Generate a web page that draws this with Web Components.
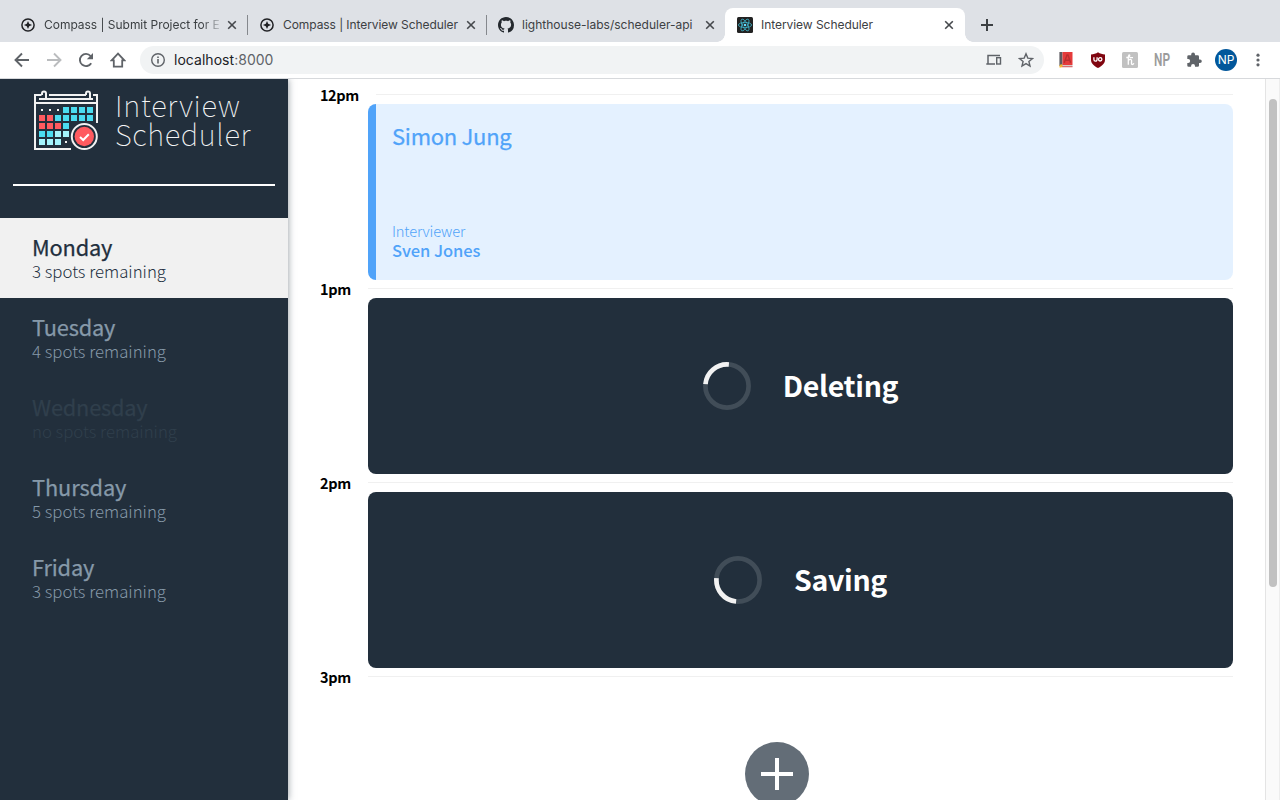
<!DOCTYPE html>
<html lang="en"><head><meta charset="utf-8"><title>Interview Scheduler</title>
<style>html,body{margin:0;height:100%;overflow:hidden;background:#fff}body{font-family:"Noto Sans CJK JP","Noto Sans",sans-serif;color:#000}</style></head>
<body><browser-window></browser-window>
<script>
const define=(name,html,setup)=>customElements.define(name,class extends HTMLElement{
  connectedCallback(){
    if(this.shadowRoot)return;
    const t=document.createElement('template');
    t.innerHTML=typeof html==='function'?html(this):html;
    this.attachShadow({mode:'open'}).appendChild(t.content.cloneNode(true));
    if(setup)setup(this);
  }
});
const attr=(e,n)=>e.getAttribute(n)||'';

/* One line of text, tracked to an optional advance width (w). */
define('fit-text','<style>:host{display:block;white-space:nowrap;width:max-content}</style><span><slot></slot></span>',e=>{
  const w=+attr(e,'w');if(!w)return;
  const s=e.shadowRoot.querySelector('span'),n=e.textContent.length;
  s.style.letterSpacing=((w-s.getBoundingClientRect().width)/n).toFixed(3)+'px';
});

const icons={
compass:'<circle cx="8" cy="8" r="6.1" fill="none" stroke="#202124" stroke-width="1.5"/><path d="M8 3.900 9.2 6.800 12.1 8 9.2 9.2 8 12.1 6.800 9.2 3.900 8 6.800 6.800Z" fill="#202124"/>',
github:'<path fill="#24292e" d="M8 0C3.58 0 0 3.58 0 8c0 3.54 2.29 6.53 5.47 7.59.4.07.55-.17.55-.38 0-.19-.01-.82-.01-1.49-2.01.37-2.53-.49-2.69-.94-.09-.23-.48-.94-.82-1.13-.28-.15-.68-.52-.01-.53.63-.01 1.08.58 1.23.82.72 1.21 1.87.87 2.33.66.07-.52.28-.87.51-1.07-1.78-.2-3.64-.89-3.64-3.95 0-.87.31-1.59.82-2.15-.08-.2-.36-1.02.08-2.12 0 0 .67-.21 2.2.82.64-.18 1.32-.27 2-.27s1.36.09 2 .27c1.53-1.04 2.2-.82 2.2-.82.44 1.1.16 1.92.08 2.12.51.56.82 1.27.82 2.15 0 3.07-1.87 3.75-3.65 3.95.29.25.54.73.54 1.48 0 1.07-.01 1.93-.01 2.2 0 .21.15.46.55.38A8.01 8.01 0 0 0 16 8c0-4.42-3.58-8-8-8Z"/>',
react:'<rect width="16" height="16" rx="1.5" fill="#222"/><g fill="none" stroke="#3fb3c9" stroke-width=".8"><ellipse cx="8" cy="8" rx="6.6" ry="2.6"/><ellipse cx="8" cy="8" rx="6.6" ry="2.6" transform="rotate(60 8 8)"/><ellipse cx="8" cy="8" rx="6.6" ry="2.6" transform="rotate(120 8 8)"/></g><circle cx="8" cy="8" r="1.3" fill="#61dafb"/>',
close:'<path d="M4.2 4.2 11.8 11.8M11.8 4.2 4.2 11.8" stroke="#45484c" stroke-width="1.6"/>',
plus:'<path d="M8 2v12M2 8h12" stroke="#3c4043" stroke-width="2"/>',
back:'<path d="M15 8H2M8 1.5 1.5 8 8 14.5" fill="none" stroke="#5f6368" stroke-width="1.9"/>',
forward:'<path d="M1 8h13M8 1.5 14.5 8 8 14.5" fill="none" stroke="#babcbe" stroke-width="1.9"/>',
reload:'<path d="M13.2 11.2A6.1 6.1 0 1 1 12.6 4" fill="none" stroke="#5f6368" stroke-width="1.9"/><path d="M15 1v6.2H8.8Z" fill="#5f6368"/>',
home:'<path d="M8 1.6 1.6 8.3H3.8V14.6H12.2V8.3h2.2Z" fill="none" stroke="#5f6368" stroke-width="1.8"/>',
info:'<circle cx="8" cy="8" r="6.3" fill="none" stroke="#5f6368" stroke-width="1.4"/><path d="M8 7v4.4M8 4.4v1.5" stroke="#5f6368" stroke-width="1.6"/>',
devices:'<path d="M2 11.6V3.6H14M.3 12H9" fill="none" stroke="#5f6368" stroke-width="1.5"/><rect x="10.7" y="5.700" width="3.800" height="6.300" fill="none" stroke="#5f6368" stroke-width="1.4"/>',
star:'<path d="M8 1.8 9.8 6.1 14.5 6.5 10.9 9.5 12 14.1 8 11.6 4 14.1 5.1 9.5 1.5 6.5 6.2 6.1Z" fill="none" stroke="#5f6368" stroke-width="1.4"/>',
book:'<path d="M1.4 0H4.500v14H1.4Z" fill="#5d5b60"/><path d="M4.500 0H14.500V13H4.500Z" fill="#e53b3b"/><path d="M4 13h10.5v2H3Z" fill="#d7c9c9"/><path d="M4 14.4h10.5v.8H4Z" fill="#d53535"/><path d="M1.5 13.2 3.3 12l1.5 1.8L3.5 15.5H1.5Z" fill="#f5b52c"/><path d="M6.2 10.8 9 3h1L12.600 10.800M7 8.3h4.8" fill="none" stroke="#b92f2f" stroke-width="1.4"/>',
ublock:'<path d="M8 .2C10 1.7 12.4 2.3 15 2.4V7.5C15 11.4 12.5 13.7 8 16 3.5 13.7 1 11.4 1 7.5V2.4C3.600 2.3 6 1.700 8 .2Z" fill="#800610"/><path d="M3.9 5.3v2.3a1.5 1.5 0 0 0 3.2 0V5.300" fill="none" stroke="#fff" stroke-width="1.3"/><circle cx="10.2" cy="7.3" r="1.7" fill="none" stroke="#fff" stroke-width="1.3"/>',
honey:'<rect width="16" height="16" rx="1.500" fill="#c1c1c1"/><path d="M4.300 5.500C6.500 5.500 8.200 4.300 7.700 3.200 7 2.300 6.300 3.800 6.300 6V12.700M6.300 9C7 7.200 9.600 6.800 9.600 8.700 9.600 10.300 9.100 12.500 10.200 12.500 11 12.500 11.500 12 11.900 11.200M7.500 5.600H11" fill="none" stroke="#fff" stroke-width="1.3"/>',
puzzle:'<path fill="#5f6368" d="M14 7.400H13V4.700A1.400 1.400 0 0 0 11.600 3.300H9V2.400A1.900 1.900 0 0 0 5.200 2.400V3.300H2.600A1.300 1.300 0 0 0 1.300 4.600V7.100H2.200A1.950 1.950 0 0 1 2.200 11H1.300V13.500A1.300 1.300 0 0 0 2.600 14.800H5.100V13.900A1.950 1.950 0 0 1 9 13.900V14.800H11.600A1.400 1.400 0 0 0 13 13.400V11H14A1.800 1.800 0 0 0 14 7.400Z"/>',
dots:'<g fill="#5f6368"><circle cx="8" cy="3.200" r="1.600"/><circle cx="8" cy="8" r="1.600"/><circle cx="8" cy="12.800" r="1.600"/></g>'
};
define('ui-icon',e=>`<style>:host{display:block;width:16px;height:16px;flex:none}svg{display:block}</style><svg width="16" height="16" viewBox="0 0 16 16">${icons[attr(e,'name')]}</svg>`);

define('browser-tab',e=>`<style>
:host{display:flex;box-sizing:border-box;width:239px;height:34px;padding:0 7px 0 12px;align-items:center;position:relative;font:12px Inter,sans-serif;color:#3c4043}
:host([active]){width:240px;background:#fff;border-radius:8px 8px 0 0;padding-right:8px}
.label{margin:-1px 0 0 8px;flex:1;min-width:0}
:host([clipped]) .label{flex:none;width:177px;-webkit-mask:linear-gradient(90deg,#000 158px,transparent 180px)}
.close{margin-left:auto}
:host([divided])::after{content:"";position:absolute;right:-1px;top:7px;width:1px;height:20px;background:#85888d}
:host([active])::before,:host([active])::after{content:"";position:absolute;bottom:0;width:8px;height:8px}
:host([active])::before{left:-8px;background:radial-gradient(circle at 0 0,transparent 7.500px,#fff 8px)}
:host([active])::after{right:-8px;background:radial-gradient(circle at 100% 0,transparent 7.500px,#fff 8px)}
</style><ui-icon name="${attr(e,'icon')}"></ui-icon><div class="label"><fit-text w="${attr(e,'w')}">${e.textContent}</fit-text></div><ui-icon class="close" name="close"></ui-icon>`);

define('tab-strip',`<style>:host{display:flex;height:42px;box-sizing:border-box;padding:8px 0 0 8px;background:#dee1e6}.new{margin:9px 0 0 14px}</style>
<browser-tab icon="compass" divided clipped w="175.800">Compass | Submit Project for E</browser-tab><browser-tab icon="compass" divided w="175">Compass | Interview Scheduler</browser-tab><browser-tab icon="github" w="170.500">lighthouse-labs/scheduler-api</browser-tab><browser-tab icon="react" active w="112">Interview Scheduler</browser-tab><ui-icon class="new" name="plus"></ui-icon>`);

define('browser-toolbar',`<style>
:host{display:flex;align-items:center;height:37px;box-sizing:border-box;padding:0 14px;gap:16px;border-bottom:1px solid #d7d9dc;background:#fff;font-family:Inter,sans-serif}
.url{display:flex;align-items:center;box-sizing:border-box;width:904px;height:28px;border-radius:14px;background:#f1f3f4;padding:0 10px;margin:0 -2px;font-size:14px;color:#202124}
.url fit-text{margin:-2px auto 0 8px}.port{color:#5f6368}.devices{margin-right:1px}.star{margin-left:15px}
.np{width:16px}.np svg{display:block;overflow:visible}
.avatar{width:22px;height:22px;margin:0 -3px;border-radius:50%;background:#02579b;color:#fff;font:12px/22px Inter,sans-serif;text-align:center;flex:none}
.exts{display:flex;gap:16px;align-items:center}
</style>
<ui-icon name="back"></ui-icon><ui-icon name="forward"></ui-icon><ui-icon name="reload"></ui-icon><ui-icon name="home"></ui-icon>
<div class="url"><ui-icon name="info"></ui-icon><fit-text w="99.500">localhost<span class="port">:8000</span></fit-text><ui-icon class="devices" name="devices"></ui-icon><ui-icon class="star" name="star"></ui-icon></div>
<div class="exts"><ui-icon name="book"></ui-icon><ui-icon name="ublock"></ui-icon><ui-icon name="honey"></ui-icon>
<div class="np"><svg width="16" height="16"><text x="0" y="14" textLength="16" lengthAdjust="spacingAndGlyphs" fill="#9b9b9b" font-family="Roboto" font-weight="600" font-size="18">NP</text></svg></div>
<ui-icon name="puzzle"></ui-icon><div class="avatar">NP</div><ui-icon name="dots"></ui-icon></div>`);

const cell=(x,y,c)=>`<rect x="${5+8*x}" y="${17+8*y}" width="6" height="6" fill="${c}"/>`;
const C='#4bdcf0',L='#a4f4fc',R='#ff5a5f';
const grid=[[0,0,0,C,C,C,C],[R,R,C,C,C,C,C],[R,R,R,C],[C,C,L,L],[L,L,L]].map((r,y)=>r.map((c,x)=>c?cell(x,y,c):'').join('')).join('');
define('scheduler-logo',`<style>:host{display:flex;height:60px;padding:11px 0 0 34px;color:#f4f5f6;font-weight:100;font-size:29.300px;line-height:29px}.words{margin-left:17px}svg{display:block;flex:none}</style>
<svg width="64" height="60" viewBox="0 0 64 60">${grid}
<g fill="#f2f2f2"><rect x="7" y="19" width="2" height="2"/><rect x="15" y="19" width="2" height="2"/><rect x="23" y="19" width="2" height="2"/><rect x="31" y="51" width="2" height="2"/></g>
<g fill="none" stroke="#f2f2f2" stroke-width="2"><path d="M37 59H1V5H7.500M15 5H52M59 5H63V33M1 13H63M5 9H59"/><path d="M8 5V3.500A2 2 0 0 1 12 3.500V9M52 5V3.500A2 2 0 0 1 56 3.500V9"/><circle cx="50.300" cy="46.500" r="12.500"/></g>
<circle cx="50.300" cy="46.500" r="9.700" fill="#ff5a5f"/><path d="M46 47 49.200 50 54.800 44.300" fill="none" stroke="#fff" stroke-width="2"/></svg>
<div class="words"><fit-text w="125.500">Interview</fit-text><fit-text w="136">Scheduler</fit-text></div>`);

define('day-item',e=>`<style>
:host{display:block;height:80px;box-sizing:border-box;padding:17px 32px 0;color:#8699a9}
:host([selected]){background:#f1f1f1;color:#222f3e}
:host([full]){color:#303f4c}
.day{font-size:21.800px;line-height:24px;font-weight:400;-webkit-text-stroke:.25px}.spots{font-size:16.800px;line-height:24px;font-weight:300}
</style><fit-text class="day" w="${attr(e,'w')}">${e.textContent}</fit-text><fit-text class="spots" w="${attr(e,'sw')||134}">${attr(e,'spots')} spots remaining</fit-text>`);

define('scheduler-sidebar',`<style>:host{display:block;width:288px;background:#222f3c;box-shadow:0 0 7px rgba(34,47,62,.5);z-index:1}
hr{border:0;height:2px;background:#fff;margin:34px 13px 32px}</style>
<scheduler-logo></scheduler-logo><hr>
<day-item selected w="80.300" spots="3">Monday</day-item><day-item w="83.300" spots="4">Tuesday</day-item><day-item full w="115.500" spots="no" sw="145">Wednesday</day-item><day-item w="94.300" spots="5">Thursday</day-item><day-item w="62.300" spots="3">Friday</day-item>`);

define('time-slot',e=>`<style>:host{display:block}header{display:flex;height:18px;font-size:14.500px;line-height:18px;font-weight:700}
.rule{flex:1;height:1px;margin:8px 0 0 17px;background:#f0f0f0}.body{margin-left:48px;height:176px}</style>
<header><fit-text w="${attr(e,'w')||30.800}">${attr(e,'time')}</fit-text><div class="rule"></div></header><div class="body"><slot></slot></div>`);

define('appointment-card',`<style>:host{display:flex;flex-direction:column;justify-content:space-between;height:176px;box-sizing:border-box;padding:15px 16px 20px 24px;border-radius:8px;background:linear-gradient(90deg,#50a3f9 8px,#e4f1ff 8px);color:#50a3f9}
.name{font-size:22px;line-height:32px;-webkit-text-stroke:.25px}.role{font-size:14.700px;line-height:18px;font-weight:300}.who{font-size:16.500px;line-height:20px;font-weight:500}</style>
<fit-text class="name" w="119.500">Simon Jung</fit-text><div><fit-text class="role" w="73">Interviewer</fit-text><fit-text class="who" w="88.300">Sven Jones</fit-text></div>`);

define('status-card',e=>`<style>:host{display:flex;align-items:center;justify-content:center;gap:32px;height:176px;box-sizing:border-box;border-radius:8px;background:#222f3c;color:#fff;font-weight:700;font-size:28.500px;line-height:40px}fit-text{margin-top:-3px}svg{display:block}</style>
<svg width="48" height="48" viewBox="0 0 48 48" fill="none" stroke-width="4.700"><circle cx="24" cy="24" r="21.600" stroke="#414d58"/><path d="M2.400 24A21.600 21.600 0 0 1 24 2.400" stroke="#f2f2f2" transform="rotate(${attr(e,'angle')} 24 24)"/></svg><fit-text w="${attr(e,'w')}">${e.textContent}</fit-text>`);

define('add-button','<style>:host{display:block;width:64px;height:64px;margin:56px 0 0 377px}svg{display:block}</style><svg width="64" height="64"><circle cx="32" cy="32" r="32" fill="#636d77"/><path d="M32 16V48M16 32H48" stroke="#fff" stroke-width="4"/></svg>');

define('schedule-list',`<style>:host{display:block;flex:1;padding:7px 32px 0;overflow:hidden;background:#fff}</style>
<time-slot time="12pm" w="38.700"><appointment-card></appointment-card></time-slot>
<time-slot time="1pm"><status-card angle="5" w="115.700">Deleting</status-card></time-slot>
<time-slot time="2pm"><status-card angle="-85" w="93">Saving</status-card></time-slot>
<time-slot time="3pm"><add-button></add-button></time-slot>`);

define('scroll-track','<style>:host{display:block;width:15px;box-sizing:border-box;padding:20px 2px 0 3px;background:#fafafa;border-left:1px solid #e4e4e4;border-right:1px solid #ededed}div{width:8px;height:488px;border-radius:4px;background:#c1c1c1}</style><div></div>');

define('browser-window','<style>:host{display:flex;flex-direction:column;width:1280px;height:800px;overflow:hidden}main{display:flex;flex:1;min-height:0;overflow:hidden}scheduler-sidebar,scroll-track{flex:none}</style><tab-strip></tab-strip><browser-toolbar></browser-toolbar><main><scheduler-sidebar></scheduler-sidebar><schedule-list></schedule-list><scroll-track></scroll-track></main>');
</script></body></html>
